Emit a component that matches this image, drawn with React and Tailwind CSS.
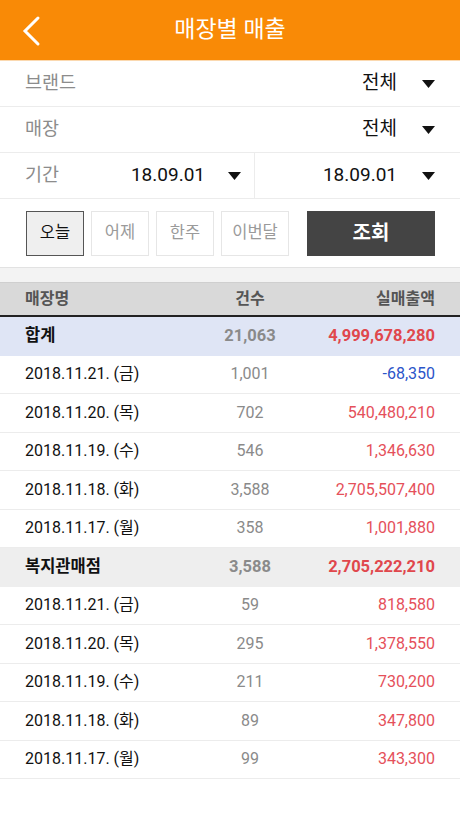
import React from "react";

const font = { fontFamily: 'Roboto, "Noto Sans CJK KR", sans-serif' };

function Caret() {
  return (
    <svg width="13" height="8" viewBox="0 0 13 8" className="shrink-0">
      <path d="M0 0 L13 0 L6.5 8 Z" fill="#111" />
    </svg>
  );
}

const groups = [
  {
    name: "합계",
    count: "21,063",
    amount: "4,999,678,280",
    bg: "bg-[#dfe5f5]",
    rows: [
      ["2018.11.21. (금)", "1,001", "-68,350", true],
      ["2018.11.20. (목)", "702", "540,480,210"],
      ["2018.11.19. (수)", "546", "1,346,630"],
      ["2018.11.18. (화)", "3,588", "2,705,507,400"],
      ["2018.11.17. (월)", "358", "1,001,880"],
    ],
  },
  {
    name: "복지관매점",
    count: "3,588",
    amount: "2,705,222,210",
    bg: "bg-[#eeeeee]",
    rows: [
      ["2018.11.21. (금)", "59", "818,580"],
      ["2018.11.20. (목)", "295", "1,378,550"],
      ["2018.11.19. (수)", "211", "730,200"],
      ["2018.11.18. (화)", "89", "347,800"],
      ["2018.11.17. (월)", "99", "343,300"],
    ],
  },
];

export default function App() {
  return (
    <div className="w-[460px] h-[818px] bg-white overflow-hidden" style={font}>
      <div className="h-[61px] bg-[#f98a06] flex items-center relative border-b border-[#fbd9b0]">
        <svg width="24" height="32" viewBox="0 0 24 32" className="absolute left-[20px] top-[15px]">
          <path d="M18 3 L5 16 L18 29" stroke="white" strokeWidth="3" fill="none" strokeLinecap="round" strokeLinejoin="miter" />
        </svg>
        <div className="flex-1 text-center text-white text-[23px] pt-[1px]">매장별 매출</div>
      </div>

      <div className="h-[46px] flex items-center px-[25px] border-b border-[#ececec]">
        <span className="text-[#8c8c8c] text-[18.5px]">브랜드</span>
        <span className="ml-auto text-[#111] text-[19px] mr-[25px]">전체</span>
        <Caret />
      </div>
      <div className="h-[46px] flex items-center px-[25px] border-b border-[#ececec]">
        <span className="text-[#8c8c8c] text-[18.5px]">매장</span>
        <span className="ml-auto text-[#111] text-[19px] mr-[25px]">전체</span>
        <Caret />
      </div>
      <div className="h-[46px] flex border-b border-[#ececec]">
        <div className="w-[255px] flex items-center pl-[25px] pr-[13px] border-r border-[#ececec]">
          <span className="text-[#8c8c8c] text-[18.5px]">기간</span>
          <span className="ml-auto text-[#111] text-[19px] mr-[23px]">18.09.01</span>
          <Caret />
        </div>
        <div className="flex-1 flex items-center pr-[25px]">
          <span className="ml-auto text-[#111] text-[19px] mr-[25px]">18.09.01</span>
          <Caret />
        </div>
      </div>

      <div className="h-[69px] flex items-center pl-[26px] pr-[25px] border-b border-[#e2e2e2]">
        <div className="w-[58px] h-[45px] border border-[#555] bg-[#efefef] flex items-center justify-center text-[16.5px] text-[#111]">오늘</div>
        <div className="w-[58px] h-[45px] ml-[7px] border border-[#e6e6e6] flex items-center justify-center text-[16.5px] text-[#9a9a9a]">어제</div>
        <div className="w-[58px] h-[45px] ml-[7px] border border-[#e6e6e6] flex items-center justify-center text-[16.5px] text-[#9a9a9a]">한주</div>
        <div className="w-[68px] h-[45px] ml-[7px] border border-[#e6e6e6] flex items-center justify-center text-[16.5px] text-[#9a9a9a]">이번달</div>
        <div className="ml-auto w-[128px] h-[45px] bg-[#444444] flex items-center justify-center text-white text-[20px] font-bold">조회</div>
      </div>
      <div className="h-[14px] bg-[#f3f3f3]" />

      <div className="h-[35px] bg-[#d9d9d9] border-t border-[#cfcfcf] border-b-2 border-b-[#222] flex items-center px-[25px] text-[16px] font-bold text-[#555]">
        <span className="w-[150px]">매장명</span>
        <span className="w-[150px] text-center">건수</span>
        <span className="flex-1 text-right">실매출액</span>
      </div>

      {groups.map((g) => (
        <React.Fragment key={g.name}>
          <div className={`h-[38.5px] ${g.bg} flex items-center px-[25px] text-[16.5px] font-bold`}>
            <span className="w-[150px] text-[#111]">{g.name}</span>
            <span className="w-[150px] text-center text-[#8a8a8a]">{g.count}</span>
            <span className="flex-1 text-right text-[#e0474c]">{g.amount}</span>
          </div>
          {g.rows.map((r, i) => (
            <div key={i} className="h-[38.5px] flex items-center px-[25px] text-[16px] border-b border-[#ececec]">
              <span className="w-[150px] text-[#111]">{r[0]}</span>
              <span className="w-[150px] text-center text-[#8a8a8a]">{r[1]}</span>
              <span className={`flex-1 text-right ${r[3] ? "text-[#2b55c9]" : "text-[#e5505a]"}`}>{r[2]}</span>
            </div>
          ))}
        </React.Fragment>
      ))}
    </div>
  );
}
